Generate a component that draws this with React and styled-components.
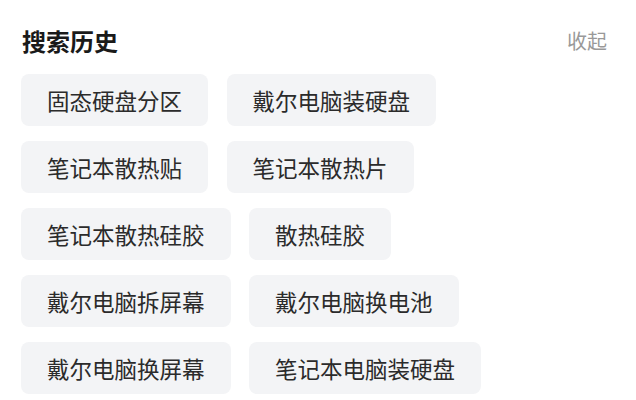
import React from "react";
import styled, { createGlobalStyle } from "styled-components";

const GlobalStyle = createGlobalStyle`
  html, body {
    margin: 0;
    padding: 0;
    background: #ffffff;
  }
  body {
    font-family: "Noto Sans CJK SC", "Noto Sans", sans-serif;
  }
`;

const Panel = styled.section`
  width: 636px;
  height: 400px;
  box-sizing: border-box;
  padding: 29px 29px 0 21px;
  overflow: hidden;
`;

const Header = styled.div`
  display: flex;
  justify-content: space-between;
  align-items: center;
  height: 24px;
  margin-bottom: 21px;
  padding-left: 1px;
`;

const Title = styled.h2`
  margin: 0;
  font-size: 24px;
  line-height: 24px;
  font-weight: 700;
  color: #1a1a1a;
`;

const Collapse = styled.button`
  border: none;
  background: none;
  padding: 0;
  font-family: inherit;
  font-size: 20px;
  line-height: 24px;
  color: #999999;
  cursor: pointer;
`;

const List = styled.div`
  display: flex;
  flex-direction: column;
  gap: 15px;
`;

const Row = styled.div`
  display: flex;
  gap: 18.5px;
`;

const Chip = styled.span`
  display: flex;
  align-items: center;
  height: 52px;
  padding: 0 26px;
  border-radius: 8px;
  background: #f3f4f6;
  color: #2b2b2b;
  font-size: 22.5px;
  white-space: nowrap;
`;

const history = [
  ["固态硬盘分区", "戴尔电脑装硬盘"],
  ["笔记本散热贴", "笔记本散热片"],
  ["笔记本散热硅胶", "散热硅胶"],
  ["戴尔电脑拆屏幕", "戴尔电脑换电池"],
  ["戴尔电脑换屏幕", "笔记本电脑装硬盘"],
];

const App = () => {
  return (
    <>
      <GlobalStyle />
      <Panel>
        <Header>
          <Title>搜索历史</Title>
          <Collapse>收起</Collapse>
        </Header>
        <List>
          {history.map((pair, i) => (
            <Row key={i}>
              {pair.map((term) => (
                <Chip key={term}>{term}</Chip>
              ))}
            </Row>
          ))}
        </List>
      </Panel>
    </>
  );
};

export default App;
